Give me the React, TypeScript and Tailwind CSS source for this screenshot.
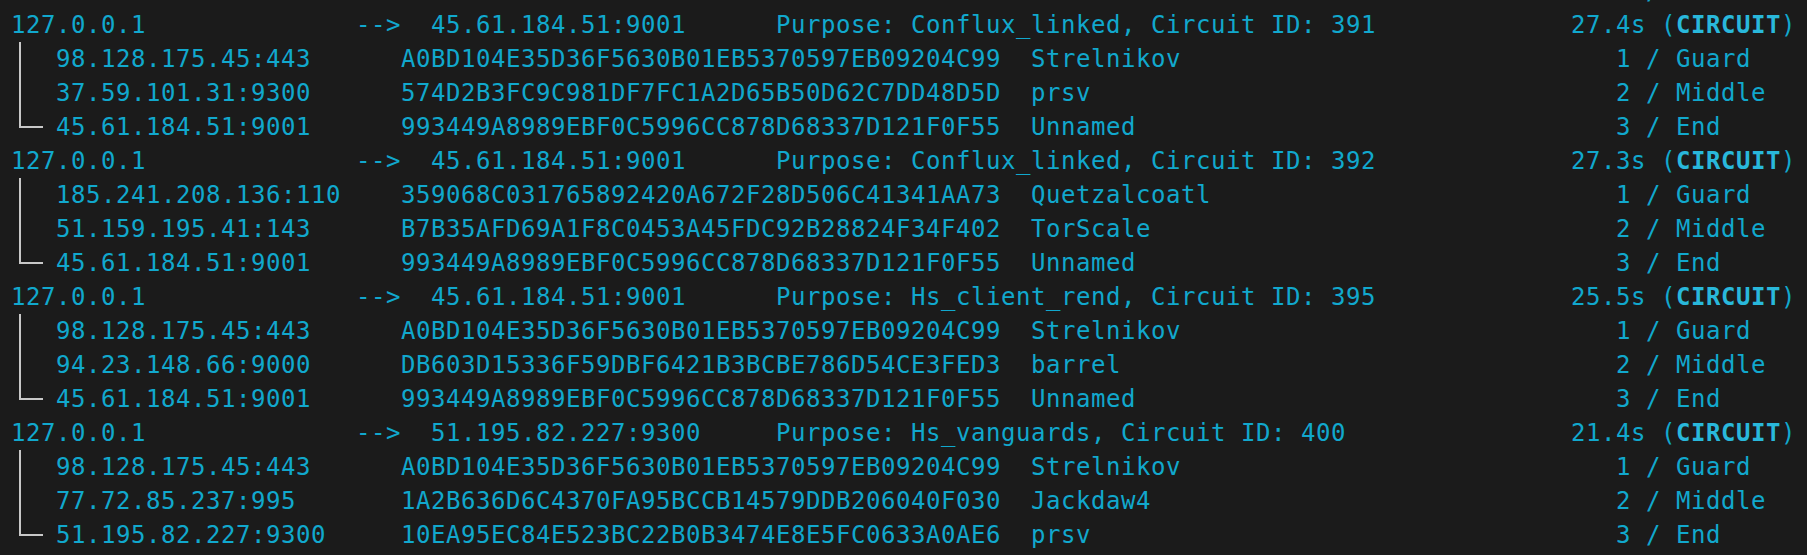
import React from "react";

type Hop = { ip: string; fp: string; nick: string };
type Circ = { dest: string; purpose: string; time: string; hops: Hop[] };

const roles = ["1 / Guard", "2 / Middle", "3 / End"];

const circuits: Circ[] = [
  {
    dest: "45.61.184.51:9001",
    purpose: "Purpose: Conflux_linked, Circuit ID: 391",
    time: "27.4s",
    hops: [
      { ip: "98.128.175.45:443", fp: "A0BD104E35D36F5630B01EB5370597EB09204C99", nick: "Strelnikov" },
      { ip: "37.59.101.31:9300", fp: "574D2B3FC9C981DF7FC1A2D65B50D62C7DD48D5D", nick: "prsv" },
      { ip: "45.61.184.51:9001", fp: "993449A8989EBF0C5996CC878D68337D121F0F55", nick: "Unnamed" },
    ],
  },
  {
    dest: "45.61.184.51:9001",
    purpose: "Purpose: Conflux_linked, Circuit ID: 392",
    time: "27.3s",
    hops: [
      { ip: "185.241.208.136:110", fp: "359068C031765892420A672F28D506C41341AA73", nick: "Quetzalcoatl" },
      { ip: "51.159.195.41:143", fp: "B7B35AFD69A1F8C0453A45FDC92B28824F34F402", nick: "TorScale" },
      { ip: "45.61.184.51:9001", fp: "993449A8989EBF0C5996CC878D68337D121F0F55", nick: "Unnamed" },
    ],
  },
  {
    dest: "45.61.184.51:9001",
    purpose: "Purpose: Hs_client_rend, Circuit ID: 395",
    time: "25.5s",
    hops: [
      { ip: "98.128.175.45:443", fp: "A0BD104E35D36F5630B01EB5370597EB09204C99", nick: "Strelnikov" },
      { ip: "94.23.148.66:9000", fp: "DB603D15336F59DBF6421B3BCBE786D54CE3FED3", nick: "barrel" },
      { ip: "45.61.184.51:9001", fp: "993449A8989EBF0C5996CC878D68337D121F0F55", nick: "Unnamed" },
    ],
  },
  {
    dest: "51.195.82.227:9300",
    purpose: "Purpose: Hs_vanguards, Circuit ID: 400",
    time: "21.4s",
    hops: [
      { ip: "98.128.175.45:443", fp: "A0BD104E35D36F5630B01EB5370597EB09204C99", nick: "Strelnikov" },
      { ip: "77.72.85.237:995", fp: "1A2B636D6C4370FA95BCCB14579DDB206040F030", nick: "Jackdaw4" },
      { ip: "51.195.82.227:9300", fp: "10EA95EC84E523BC22B0B3474E8E5FC0633A0AE6", nick: "prsv" },
    ],
  },
];

function Tree({ last }: { last: boolean }) {
  return (
    <div className="w-[45px] h-[34px] shrink-0">
      {last ? (
        <div className="ml-[8px] w-[24px] h-[18px] border-l-2 border-b-2 border-[#c8c8c8]" />
      ) : (
        <div className="ml-[8px] h-[34px] border-l-2 border-[#c8c8c8]" />
      )}
    </div>
  );
}

export default function App() {
  return (
    <div
      className="w-[1807px] h-[555px] overflow-hidden bg-[#1b1b1b] text-[#11a8cd] text-[24px] leading-[34px] tracking-[0.55px] whitespace-pre"
      style={{ fontFamily: '"DejaVu Sans Mono", "Liberation Mono", monospace' }}
    >
      <div className="pl-[11px] pt-[8px] flex flex-col">
        <div className="flex h-[34px] -mt-[34px]">
          <span className="w-[1605px] shrink-0" />
          <span>3 / End</span>
        </div>
        {circuits.map((c, ci) => (
          <React.Fragment key={ci}>
            <div className="flex h-[34px]">
              <span className="w-[345px] shrink-0">127.0.0.1</span>
              <span className="w-[75px] shrink-0">--&gt;</span>
              <span className="w-[345px] shrink-0">{c.dest}</span>
              <span className="w-[795px] shrink-0">{c.purpose}</span>
              <span>
                {c.time} (<span className="font-bold text-[#29b8db]">CIRCUIT</span>)
              </span>
            </div>
            {c.hops.map((h, hi) => (
              <div key={hi} className="flex h-[34px]">
                <Tree last={hi === c.hops.length - 1} />
                <span className="w-[345px] shrink-0">{h.ip}</span>
                <span className="w-[630px] shrink-0">{h.fp}</span>
                <span className="w-[585px] shrink-0">{h.nick}</span>
                <span>{roles[hi]}</span>
              </div>
            ))}
          </React.Fragment>
        ))}
      </div>
    </div>
  );
}
